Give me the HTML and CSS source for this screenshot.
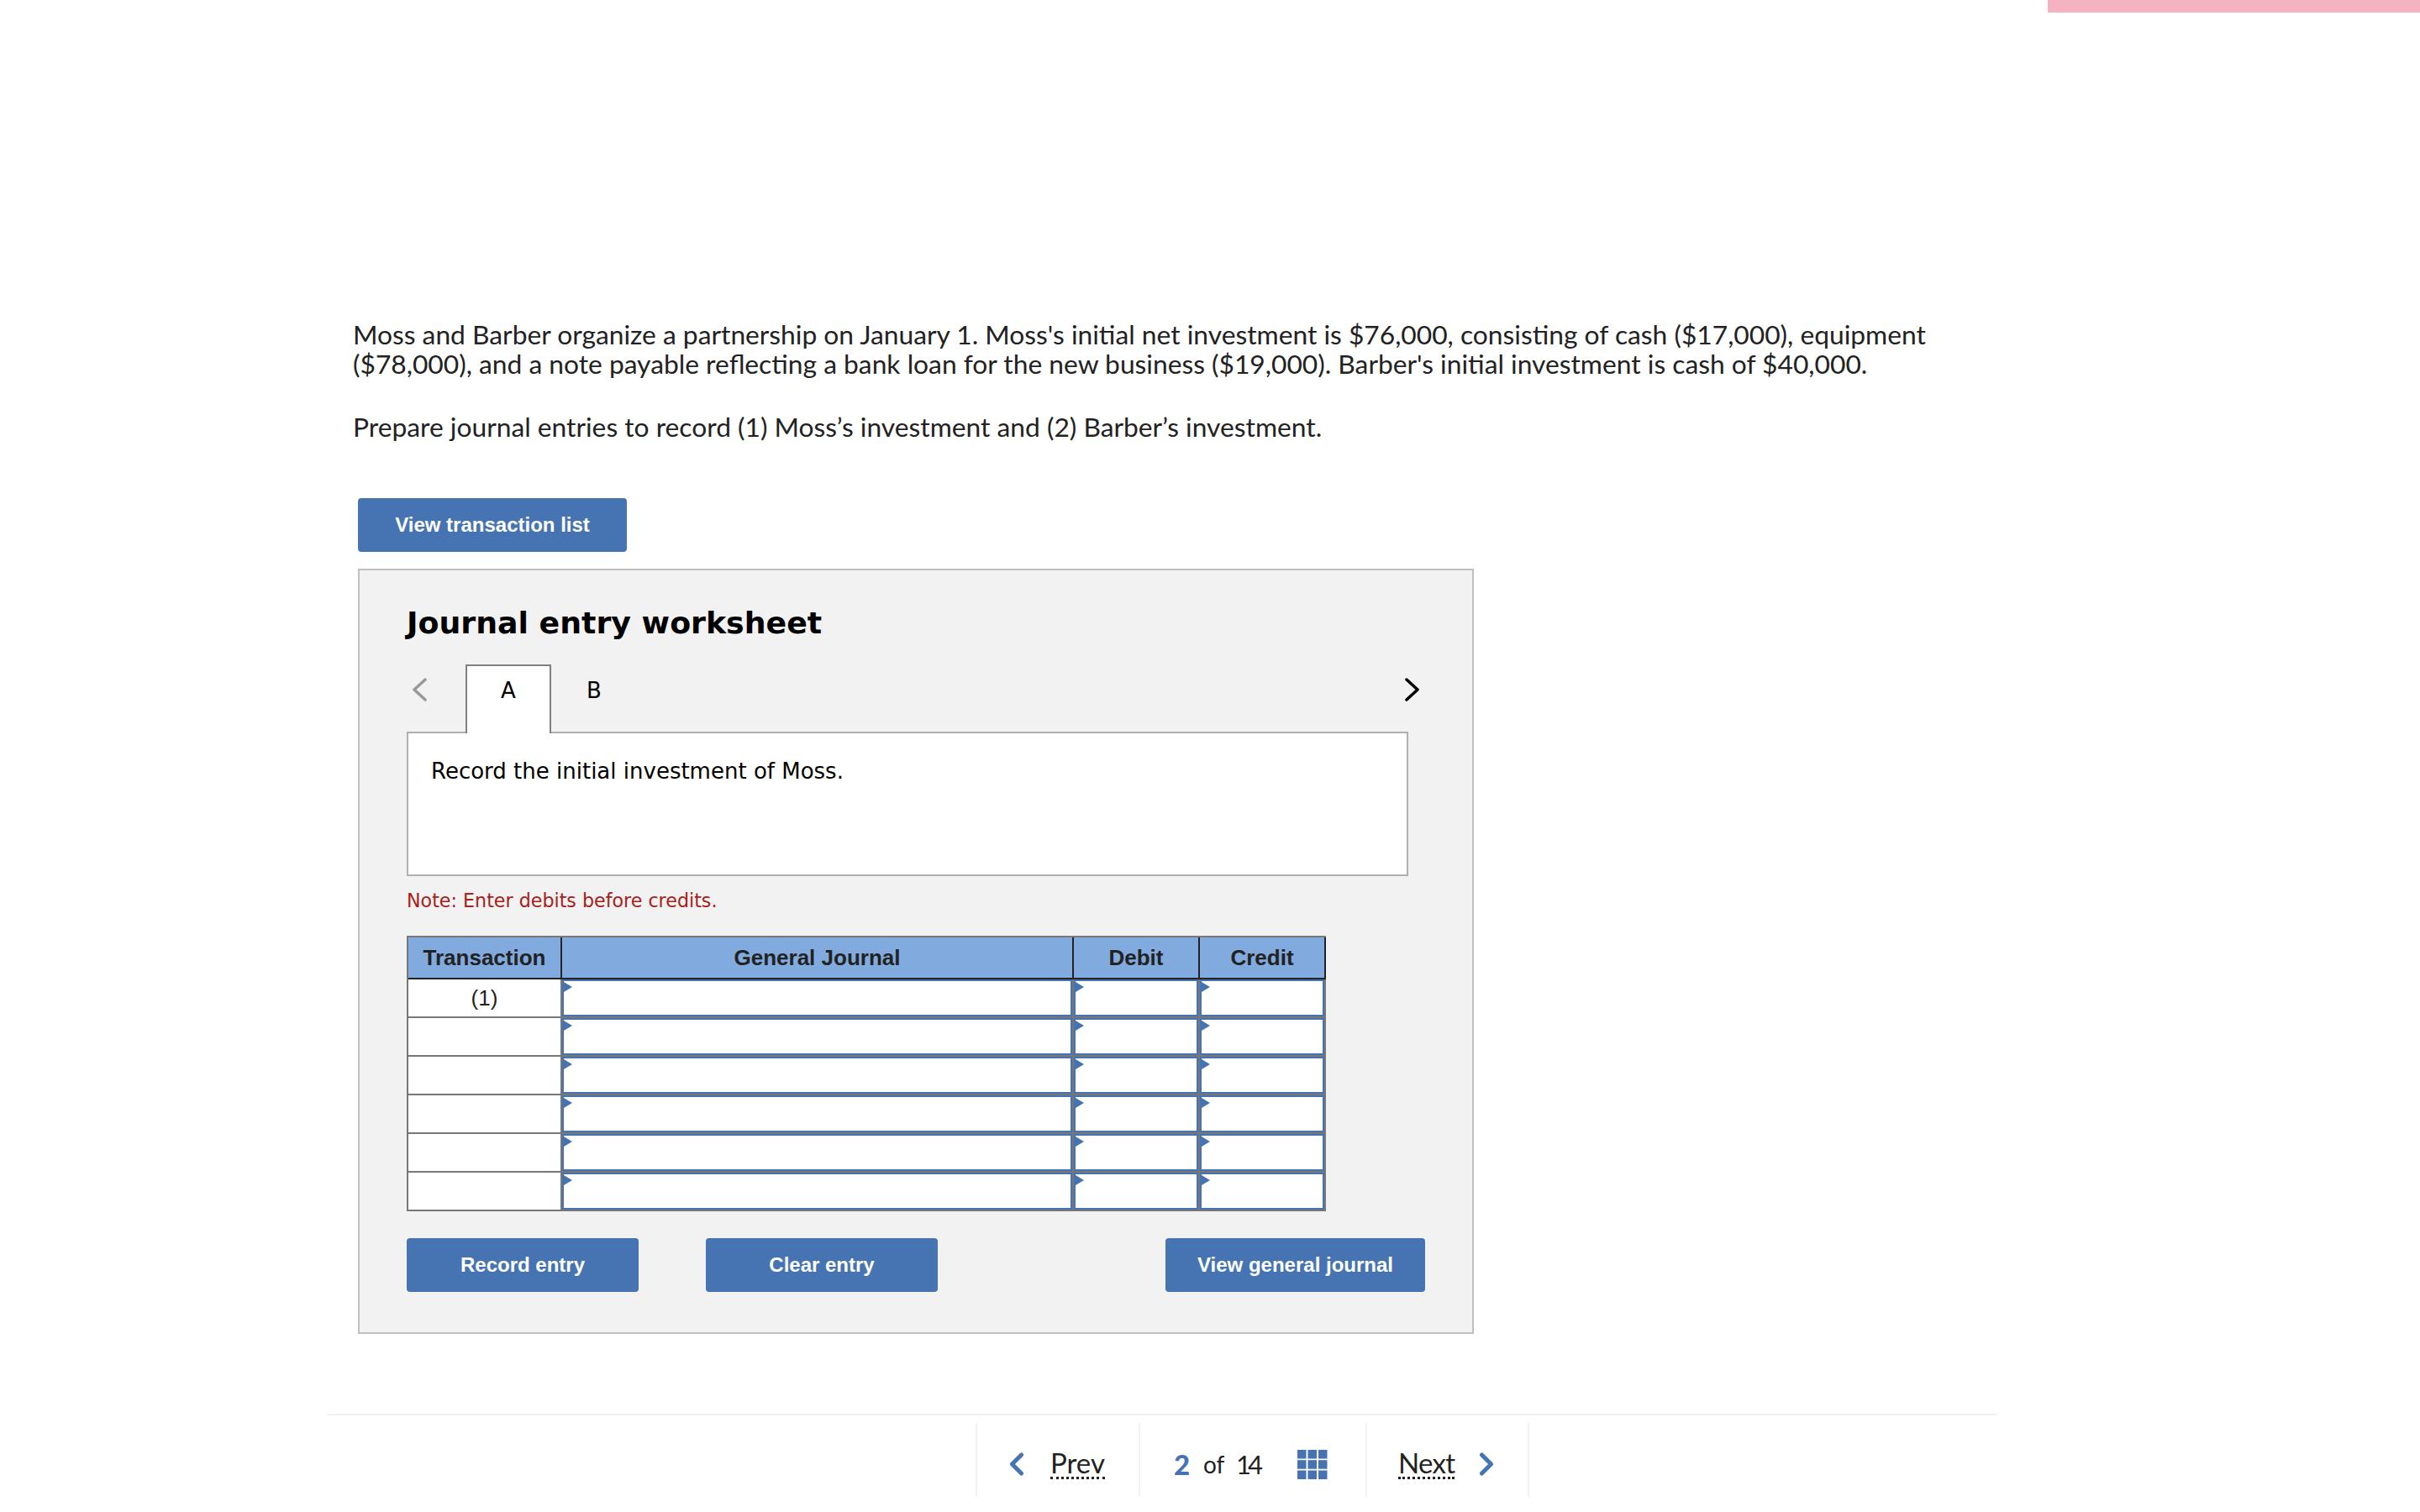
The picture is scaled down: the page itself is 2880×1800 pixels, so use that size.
FILE: index.html
```html
<!DOCTYPE html>
<html lang="en">
<head>
<meta charset="utf-8">
<title>Journal entry worksheet</title>
<link rel="stylesheet" href="styles.css">
</head>
<body>
<div class="topbar"><div class="progress"></div></div>
<main class="content">
  <div class="question">
    <p class="para">Moss and Barber organize a partnership on January 1. Moss's initial net investment is $76,000, consisting of cash ($17,000), equipment ($78,000), and a note payable reflecting a bank loan for the new business ($19,000). Barber's initial investment is cash of $40,000.</p>
    <p class="para para-gap">Prepare journal entries to record (1) Moss’s investment and (2) Barber’s investment.</p>
  </div>
  <div class="btn btn-list">View transaction list</div>
  <section class="panel">
    <h2 class="title">Journal entry worksheet</h2>
    <div class="tabs">
      <div class="tab-prev"><svg width="18" height="28" viewBox="0 0 18 28"><path d="M16 2 L3 14 L16 26" fill="none" stroke="#999" stroke-width="3.5" stroke-linecap="round" stroke-linejoin="round"/></svg></div>
      <div class="tab tab-active">A</div>
      <div class="tab">B</div>
      <div class="tab-next"><svg width="18" height="28" viewBox="0 0 18 28"><path d="M2 2 L15 14 L2 26" fill="none" stroke="#000" stroke-width="3.5" stroke-linecap="round" stroke-linejoin="round"/></svg></div>
    </div>
    <div class="prompt">Record the initial investment of Moss.</div>
    <div class="note">Note: Enter debits before credits.</div>
    <div class="journal">
      <div class="jhead">
        <div class="jh">Transaction</div>
        <div class="jh">General Journal</div>
        <div class="jh">Debit</div>
        <div class="jh">Credit</div>
      </div>
      <div class="jbody">
        <div class="jc jt">(1)</div><div class="jc ji"></div><div class="jc ji"></div><div class="jc ji"></div>
        <div class="jc jt"></div><div class="jc ji"></div><div class="jc ji"></div><div class="jc ji"></div>
        <div class="jc jt"></div><div class="jc ji"></div><div class="jc ji"></div><div class="jc ji"></div>
        <div class="jc jt"></div><div class="jc ji"></div><div class="jc ji"></div><div class="jc ji"></div>
        <div class="jc jt"></div><div class="jc ji"></div><div class="jc ji"></div><div class="jc ji"></div>
        <div class="jc jt"></div><div class="jc ji"></div><div class="jc ji"></div><div class="jc ji"></div>
      </div>
    </div>
    <div class="actions">
      <div class="btn btn-entry">Record entry</div>
      <div class="btn btn-entry">Clear entry</div>
      <div class="btn btn-view">View general journal</div>
    </div>
  </section>
</main>
<footer class="footer">
  <nav class="pager">
    <div class="cell cell-prev">
      <svg class="chev" width="18" height="28" viewBox="0 0 18 28"><path d="M14.5 3 L3.5 14 L14.5 25" fill="none" stroke="#4674b2" stroke-width="5" stroke-linecap="round" stroke-linejoin="round"/></svg>
      <span class="navlink">Prev</span>
    </div>
    <div class="cell cell-mid">
      <span class="cur">2</span><span class="of">of</span><span class="total">14</span>
      <svg class="gridicon" width="36" height="35" viewBox="0 0 36 35"><g fill="#4674b2"><rect x="0" y="0" width="10.5" height="10.5"/><rect x="12.5" y="0" width="10.5" height="10.5"/><rect x="25" y="0" width="10.5" height="10.5"/><rect x="0" y="12.2" width="10.5" height="10.5"/><rect x="12.5" y="12.2" width="10.5" height="10.5"/><rect x="25" y="12.2" width="10.5" height="10.5"/><rect x="0" y="24.5" width="10.5" height="10.5"/><rect x="12.5" y="24.5" width="10.5" height="10.5"/><rect x="25" y="24.5" width="10.5" height="10.5"/></g></svg>
    </div>
    <div class="cell cell-next">
      <span class="navlink navlink-next">Next</span>
      <svg class="chev chev-next" width="18" height="28" viewBox="0 0 18 28"><path d="M3.5 3 L14.5 14 L3.5 25" fill="none" stroke="#4674b2" stroke-width="5" stroke-linecap="round" stroke-linejoin="round"/></svg>
    </div>
  </nav>
</footer>
</body>
</html>
```
FILE: styles.css
```css
* { box-sizing: border-box; }
html, body { margin: 0; padding: 0; background: #fff; }
body { height: 1800px; overflow: hidden; font-family: "Lato", "Liberation Sans", sans-serif; color: #222; }
.topbar { display: flex; justify-content: flex-end; height: 15px; }
.progress { width: 443px; height: 15px; background: #f5b2c0; }
.content { padding: 366px 0 0 420px; }
.question { width: 1900px; }
.para { margin: 0; font-size: 31.75px; line-height: 35px; }
.para-gap { margin-top: 40px; }
.btn { display: flex; align-items: center; justify-content: center; background: #4674b2; color: #fff; border-radius: 4px; font-family: "Liberation Sans", Arial, sans-serif; font-weight: 700; font-size: 24px; }
.btn-list { width: 320px; height: 64px; margin: 67px 0 0 6px; }
.panel { width: 1328px; height: 911px; margin: 20px 0 0 6px; padding: 0 0 0 56px; background: #f2f2f2; border: 2px solid #c0c0c0; }
.title { margin: 0; padding-top: 41px; font-family: "DejaVu Sans", Verdana, sans-serif; font-weight: 700; font-size: 36.3px; line-height: 44px; color: #000; }
.tabs { display: flex; width: 1206px; height: 82px; margin-top: 27px; align-items: flex-start; font-family: "DejaVu Sans", Verdana, sans-serif; font-size: 26px; color: #000; }
.tab-prev { width: 70px; height: 80px; padding: 16px 0 0 6px; }
.tab { position: relative; z-index: 1; width: 102px; height: 82px; padding-top: 16px; text-align: center; line-height: 30px; }
.tab-active { background: #fff; border: 2px solid #808080; border-bottom: 0; padding-top: 14px; }
.tab-next { margin-left: auto; padding-top: 16px; }
.tab-prev svg, .tab-next svg { display: block; }
.prompt { width: 1192px; height: 172px; margin-top: -2px; padding: 30px 0 0 27px; background: #fff; border: 2px solid #b0b0b0; font-family: "DejaVu Sans", Verdana, sans-serif; font-size: 26px; line-height: 30px; color: #000; }
.note { margin-top: 16px; font-family: "DejaVu Sans", Verdana, sans-serif; font-size: 22.2px; line-height: 26px; color: #a8201a; }
.journal { width: 1094px; margin-top: 29px; border: 2px solid #777; }
.jhead { display: grid; grid-template-columns: 181px 607px 148px 148px; column-gap: 2px; margin-right: -2px; background: #222; border-right: 2px solid #222; border-bottom: 2px solid #222; }
.jh { height: 48px; display: flex; align-items: center; justify-content: center; background: #81aadf; font-family: "Liberation Sans", Arial, sans-serif; font-weight: 700; font-size: 26px; color: #222; }
.jbody { display: grid; grid-template-columns: 181px 607px 148px 148px; grid-auto-rows: 44px; gap: 2px; background: #777; }
.jc { background: #fff; }
.jt { display: flex; align-items: center; justify-content: center; font-family: "Liberation Sans", Arial, sans-serif; font-size: 26px; color: #222; }
.ji { position: relative; border: 2px solid #4674b2; }
.ji::before { content: ""; position: absolute; left: 0; top: 1px; width: 0; height: 0; border-left: 10px solid #4674b2; border-top: 6.5px solid transparent; border-bottom: 6.5px solid transparent; }
.actions { display: flex; width: 1212px; margin-top: 32px; gap: 80px; }
.btn-entry { width: 276px; height: 64px; }
.btn-view { width: 309px; height: 64px; margin-left: auto; }
.footer { margin: 0 0 0 390px; width: 1987px; position: absolute; top: 1683px; border-top: 2px solid #f2f2f2; }
.pager { display: flex; margin: 9px 0 0 771px; height: 88px; }
.cell { display: flex; align-items: center; height: 88px; padding-top: 10px; border-right: 2px solid #f2f2f2; font-size: 33px; }
.cell-prev { width: 196px; padding-left: 38px; border-left: 2px solid #f2f2f2; }
.cell-mid { width: 270px; padding-left: 40px; }
.cell-next { width: 193px; padding-left: 37px; }
.chev { flex: none; }
.navlink { margin-left: 31px; line-height: 33px; border-bottom: 3px dotted #222; }
.navlink-next { margin-left: 0; letter-spacing: -0.7px; }
.chev-next { margin-left: 29px; }
.cur { font-weight: 900; color: #4674b2; width: 35px; }
.of { font-size: 28px; width: 39px; }
.total { font-size: 31px; letter-spacing: -4px; width: 32px; }
.gridicon { margin-left: 41px; flex: none; }
```
